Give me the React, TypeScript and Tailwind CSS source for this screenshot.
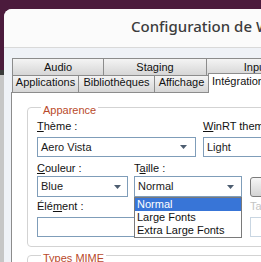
import React from 'react';

const Arrow: React.FC = () => (
  <svg width="7" height="4" viewBox="0 0 7 4" className="shrink-0">
    <path d="M0 0 H7 L3.5 4 Z" fill="#4d5d70" />
  </svg>
);

const Combo: React.FC<{ value: string; arrowPad: string; height: string }> = ({ value, arrowPad, height }) => (
  <div className={`flex items-center justify-between bg-white border border-[#7f9db9] pl-[3px] ${arrowPad} ${height}`}>
    <span className="leading-[13px] text-[#1a1a1a]">{value}</span>
    <Arrow />
  </div>
);

const Label: React.FC<{ children: React.ReactNode; muted?: boolean }> = ({ children, muted }) => (
  <div className={`h-[13px] leading-[13px] whitespace-nowrap ${muted ? 'text-[#c4c4c4]' : 'text-[#111]'}`}>{children}</div>
);

const App: React.FC = () => {
  const topTabs = [
    { name: 'Audio', w: 'w-[92px]' },
    { name: 'Staging', w: 'w-[104px]' },
    { name: 'Input', w: 'w-[100px]' },
  ];
  const bottomTabs = [
    { name: 'Applications', w: 'w-[67px]' },
    { name: 'Bibliothèques', w: 'w-[77px]' },
    { name: 'Affichage', w: 'w-[55px]' },
  ];

  const tabClass =
    'h-[18px] -ml-px first:ml-0 flex items-center justify-center border border-[#8c8c8c] bg-linear-to-b from-[#f4f4f4] to-[#d6d6d6] text-[#111] leading-[13px] whitespace-nowrap';

  return (
    <div className="w-[261px] h-[262px] overflow-hidden bg-[#4b1b3c] flex font-['Liberation_Sans',Arial,sans-serif] text-[11px]">
      {/* what is left of the desktop behind the window */}
      <div className="w-[4px] shrink-0 flex flex-col">
        <div className="h-[70px] bg-[#4b1b3c]" />
        <div className="h-[5px] bg-[#3b3b3b]" />
        <div className="flex-1 bg-[#c6c6c6]" />
      </div>

      <div className="flex-1 min-w-0 mt-[9px] rounded-tl-[8px] overflow-hidden bg-[#eff2f7] flex flex-col">
        <div className="h-[39px] shrink-0 bg-[#fbfbfb] border-b border-[#d9d9d9] pl-[127px] pt-[8px]">
          <div className="font-['Noto_Sans',sans-serif] text-[15px] leading-[19px] font-medium text-[#3c3c3c] whitespace-nowrap">
            Configuration de Wine
          </div>
        </div>

        <div className="flex-1 flex flex-col pl-[7px] pt-[10px] w-[420px]">
          <div className="ml-px flex">
            {topTabs.map(t => (
              <div key={t.name} className={`${tabClass} ${t.w}`}>{t.name}</div>
            ))}
          </div>
          <div className="ml-px -mt-px flex">
            {bottomTabs.map(t => (
              <div key={t.name} className={`${tabClass} ${t.w} pb-[3px]`}>{t.name}</div>
            ))}
            <div className="-ml-px relative z-10 self-start -mt-[2px] h-[20px] w-[90px] border border-b-0 border-[#8c8c8c] bg-white pl-[3px] pt-[1px] leading-[13px] text-[#111] whitespace-nowrap">
              Intégration
            </div>
          </div>

          <div className="-mt-px flex-1 bg-white border-l border-t border-[#8c8c8c] pl-[15px] pt-[5px]">
            <fieldset className="border border-[#d3d3d3] rounded-[4px] pl-[9px] pt-[3px] pb-[9px]">
              <legend className="ml-[4px] px-[2px] pt-[5px] leading-[14px] text-[#b94a2b]">Apparence</legend>

              <div className="flex gap-[7px]">
                <div className="w-[159px]">
                  <Label><span className="underline">T</span>hème :</Label>
                  <div className="mt-[4px]">
                    <Combo value="Aero Vista" arrowPad="pr-[8px]" height="h-[20px]" />
                  </div>
                </div>
                <div className="w-[200px]">
                  <Label><span className="underline">W</span>inRT theme :</Label>
                  <div className="mt-[4px]">
                    <Combo value="Light" arrowPad="pr-[8px]" height="h-[20px]" />
                  </div>
                </div>
              </div>

              <div className="flex mt-[5px]">
                <div className="w-[91px]">
                  <Label><span className="underline">C</span>ouleur :</Label>
                  <div className="mt-[1px]">
                    <Combo value="Blue" arrowPad="pr-[6px]" height="h-[21px]" />
                  </div>
                </div>
                <div className="w-[108px] ml-[6px]">
                  <Label>T<span className="underline">a</span>ille :</Label>
                  <div className="mt-[1px] relative">
                    <Combo value="Normal" arrowPad="pr-[7px]" height="h-[21px]" />
                    <div className="absolute left-0 top-full w-full z-20 bg-white border border-[#7a7a7a] leading-[13px] text-[#111]">
                      <div className="h-[13px] pl-[2px] bg-[#3875d7] text-white">Normal</div>
                      <div className="h-[13px] pl-[2px]">Large Fonts</div>
                      <div className="h-[13px] pl-[2px]">Extra Large Fonts</div>
                    </div>
                  </div>
                </div>
                <div className="w-[70px] ml-[8px]">
                  <div className="h-[13px]" />
                  <div className="mt-[2px] h-[20px] rounded-[3px] border border-[#7b7b7b] bg-linear-to-b from-[#f6f6f6] to-[#d4d4d4]" />
                </div>
              </div>

              <div className="flex mt-[3px]">
                <div className="w-[204px]">
                  <Label>Élé<span className="underline">m</span>ent :</Label>
                  <div className="mt-[4px] h-[20px] bg-white border border-[#7f9db9]" />
                </div>
                <div className="w-[100px] ml-[9px]">
                  <Label muted>Taille :</Label>
                  <div className="mt-[4px] h-[20px] bg-white border border-[#c9d6e2]" />
                </div>
              </div>
            </fieldset>

            <fieldset className="-mt-px border border-[#d3d3d3] rounded-[4px] pl-[9px] h-[40px]">
              <legend className="ml-[4px] px-[2px] pt-[5px] leading-[14px] text-[#b94a2b]">Types MIME</legend>
            </fieldset>
          </div>
        </div>
      </div>
    </div>
  );
};

export default App;
